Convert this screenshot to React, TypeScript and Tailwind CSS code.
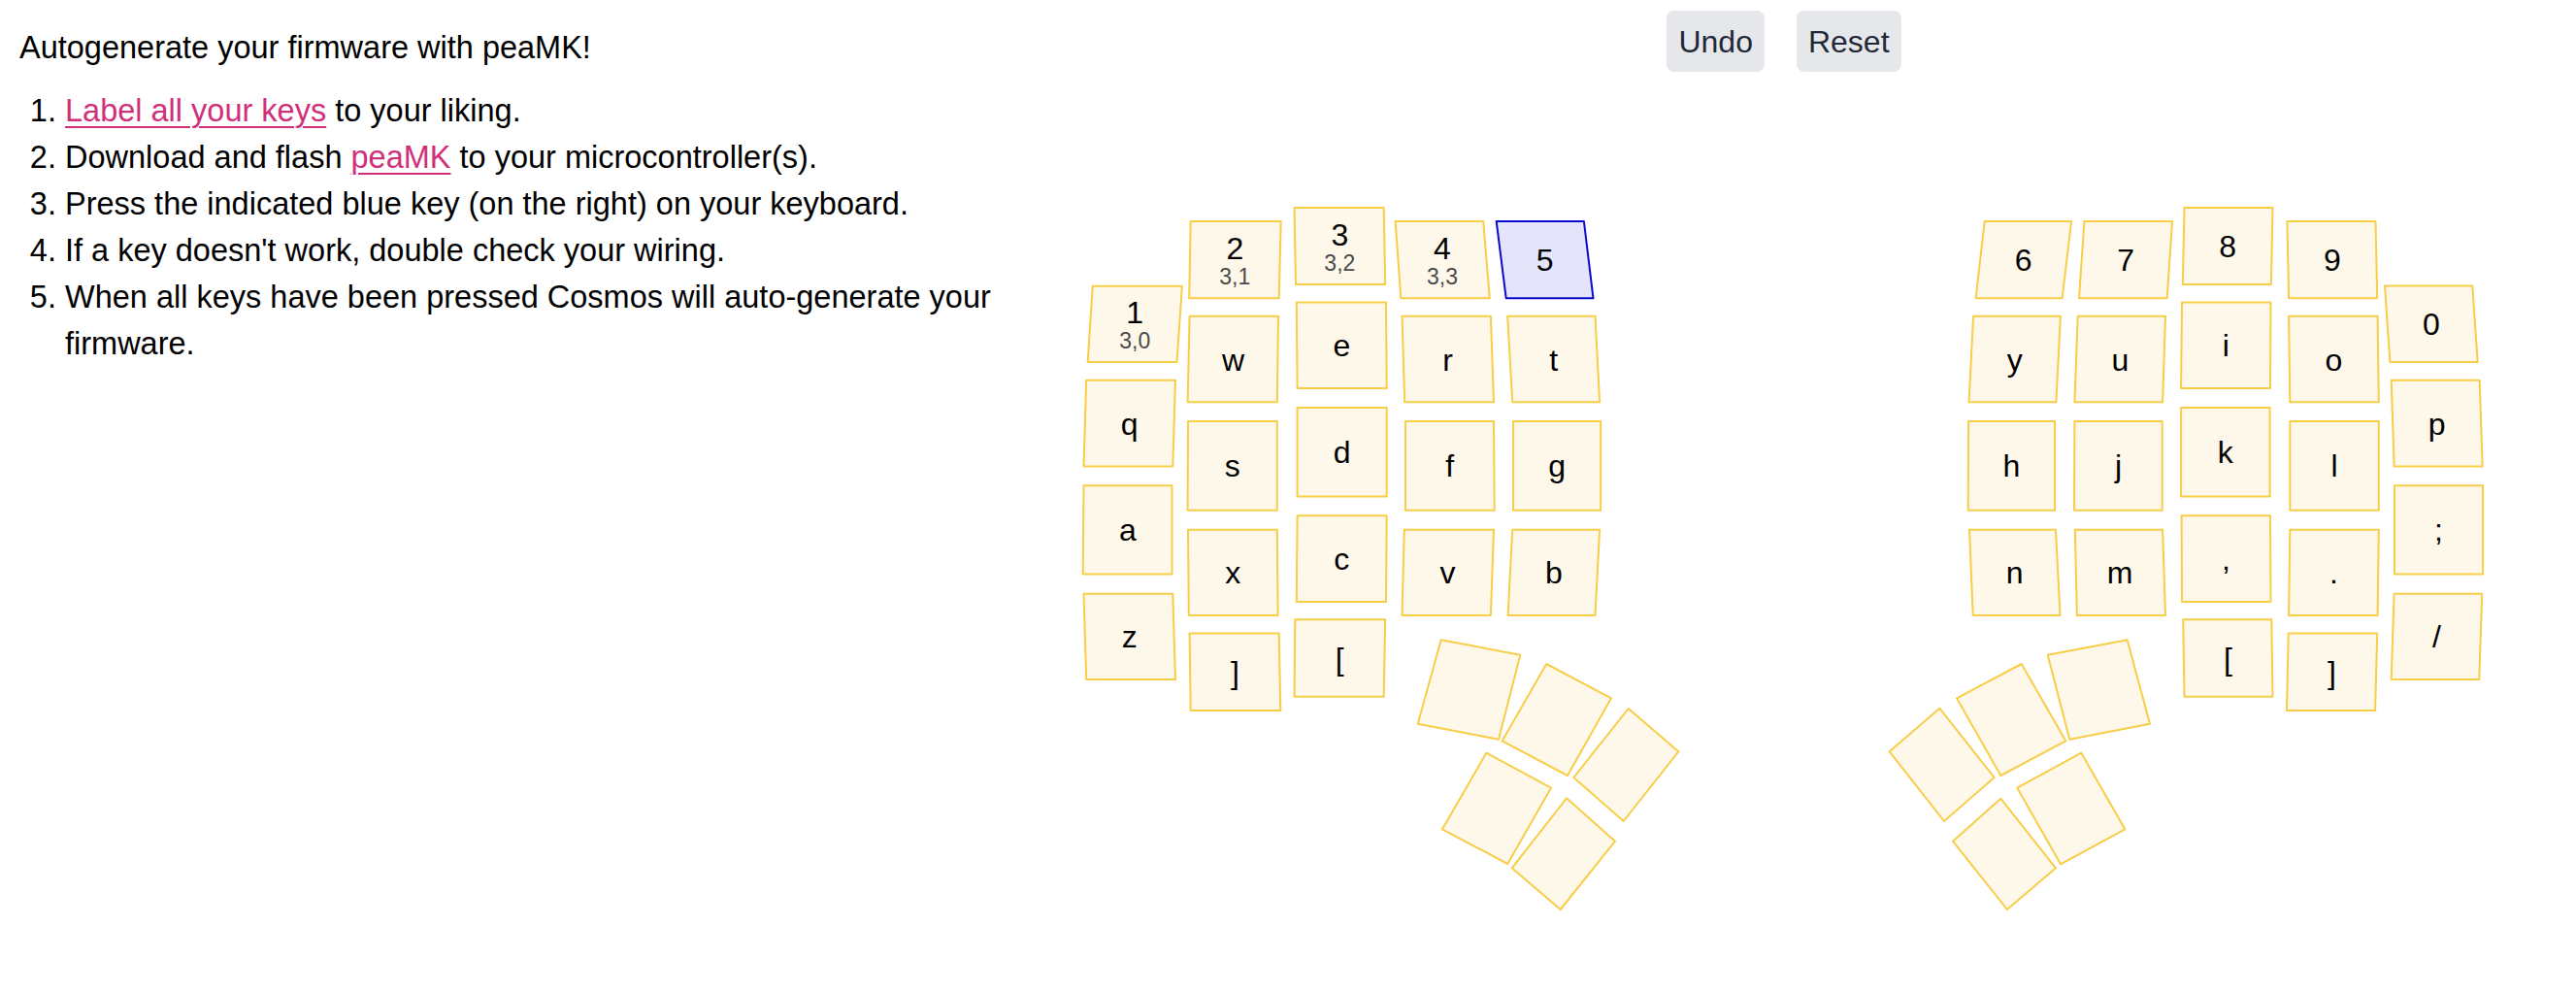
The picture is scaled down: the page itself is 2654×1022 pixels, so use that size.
import React from "react";

type Pt = [number, number];
type Key = { p: Pt[]; l?: string; s?: string; a?: boolean };

const keys: Key[] = [
  // left half
  { p: [[1125.7, 294.8], [1217.9, 294.8], [1212.5, 373.0], [1120.7, 373.0]], l: "1", s: "3,0" },
  { p: [[1226.7, 228], [1319.7, 228], [1317.7, 307.3], [1225.2, 307.3]], l: "2", s: "3,1" },
  { p: [[1333.5, 214], [1425.7, 214], [1427.2, 293], [1335.0, 293]], l: "3", s: "3,2" },
  { p: [[1437.6, 228], [1528.2, 228], [1534.8, 307.3], [1443.3, 307.3]], l: "4", s: "3,3" },
  { p: [[1541.7, 228], [1631.9, 228], [1641.5, 307.3], [1551.7, 307.3]], l: "5", a: true },
  { p: [[1225.6, 325.8], [1317.0, 325.8], [1315.8, 414.3], [1223.6, 414.3]], l: "w" },
  { p: [[1335.8, 311.4], [1428.0, 311.4], [1428.7, 400], [1336.6, 400]], l: "e" },
  { p: [[1444.5, 325.8], [1535.9, 325.8], [1539.0, 414.3], [1447.2, 414.3]], l: "r" },
  { p: [[1553.2, 325.8], [1643.5, 325.8], [1648.1, 414.3], [1558.2, 414.3]], l: "t" },
  { p: [[1119.2, 391.8], [1211.0, 391.8], [1208.3, 480.4], [1116.5, 480.4]], l: "q" },
  { p: [[1224.0, 433.9], [1315.8, 433.9], [1315.8, 525.8], [1223.6, 525.8]], l: "s" },
  { p: [[1336.6, 419.9], [1428.7, 419.9], [1428.7, 511.4], [1336.6, 511.4]], l: "d" },
  { p: [[1448.0, 433.9], [1539.0, 433.9], [1539.7, 525.8], [1448.0, 525.8]], l: "f" },
  { p: [[1559.0, 433.9], [1649.2, 433.9], [1649.2, 525.8], [1559.0, 525.8]], l: "g" },
  { p: [[1116.5, 500.3], [1207.5, 500.3], [1207.5, 591.5], [1115.7, 591.5]], l: "a" },
  { p: [[1224.0, 545.7], [1315.8, 545.7], [1316.6, 633.9], [1224.8, 633.9]], l: "x" },
  { p: [[1336.6, 531.3], [1428.7, 531.3], [1428.0, 619.9], [1335.8, 619.9]], l: "c" },
  { p: [[1446.8, 545.7], [1539.0, 545.7], [1535.9, 633.9], [1444.5, 633.9]], l: "v" },
  { p: [[1558.2, 545.7], [1648.1, 545.7], [1643.5, 633.9], [1553.6, 633.9]], l: "b" },
  { p: [[1116.5, 611.8], [1208.3, 611.8], [1211.0, 700], [1119.2, 700]], l: "z" },
  { p: [[1225.6, 652.4], [1317.7, 652.4], [1319.3, 732.1], [1226.7, 732.1]], l: "]" },
  { p: [[1334.3, 638.3], [1427.2, 638.3], [1425.7, 717.7], [1333.5, 717.7]], l: "[" },
  // left thumbs
  { p: [[1484.7, 659.3], [1566.3, 674.7], [1544, 761.7], [1460.7, 745.7]] },
  { p: [[1593.3, 684], [1660, 719.3], [1615, 799], [1547.7, 763.3]] },
  { p: [[1677.7, 730], [1729.3, 774.3], [1672.7, 846], [1621.3, 801]] },
  { p: [[1531.3, 775.7], [1598, 811.7], [1553.3, 890], [1486, 854.3]] },
  { p: [[1614, 822.3], [1664, 866.7], [1607.7, 937], [1557.7, 894.3]] },
  // right half
  { p: [[2044.7, 228], [2134.1, 228], [2124.6, 307.3], [2035.6, 307.3]], l: "6" },
  { p: [[2147.4, 228], [2238.0, 228], [2232.7, 307.3], [2142.0, 307.3]], l: "7" },
  { p: [[2250.5, 214], [2341.5, 214], [2339.9, 293], [2248.8, 293]], l: "8" },
  { p: [[2356.4, 228], [2447.5, 228], [2449.2, 307.3], [2358.1, 307.3]], l: "9" },
  { p: [[2457.0, 294.4], [2547.3, 294.4], [2552.7, 373], [2462.4, 373]], l: "0" },
  { p: [[2033.1, 325.8], [2122.9, 325.8], [2118.4, 414.3], [2028.5, 414.3]], l: "y" },
  { p: [[2140.7, 325.8], [2231.0, 325.8], [2228.1, 414.3], [2137.4, 414.3]], l: "u" },
  { p: [[2248.0, 311.4], [2339.5, 311.4], [2339.0, 400], [2247.1, 400]], l: "i" },
  { p: [[2358.1, 325.8], [2449.6, 325.8], [2450.8, 414.3], [2359.3, 414.3]], l: "o" },
  { p: [[2463.7, 391.8], [2554.7, 391.8], [2557.6, 480.4], [2466.6, 480.4]], l: "p" },
  { p: [[2028.1, 433.9], [2117.1, 433.9], [2117.1, 525.8], [2027.7, 525.8]], l: "h" },
  { p: [[2137.4, 433.9], [2227.7, 433.9], [2227.7, 525.8], [2137.0, 525.8]], l: "j" },
  { p: [[2247.1, 419.9], [2338.6, 419.9], [2338.6, 511.4], [2247.1, 511.4]], l: "k" },
  { p: [[2359.3, 433.9], [2450.8, 433.9], [2450.8, 525.8], [2359.3, 525.8]], l: "l" },
  { p: [[2467.0, 500.3], [2558.1, 500.3], [2558.1, 591.5], [2467.0, 591.5]], l: ";" },
  { p: [[2029.0, 545.7], [2118.0, 545.7], [2122.5, 633.9], [2032.7, 633.9]], l: "n" },
  { p: [[2137.8, 545.7], [2228.1, 545.7], [2231.0, 633.9], [2139.9, 633.9]], l: "m" },
  { p: [[2247.6, 531.3], [2339.0, 531.3], [2339.5, 619.9], [2248.0, 619.9]], l: "," },
  { p: [[2359.3, 545.7], [2450.8, 545.7], [2449.6, 633.9], [2358.1, 633.9]], l: "." },
  { p: [[2466.6, 611.8], [2557.2, 611.8], [2554.3, 700], [2463.7, 700]], l: "/" },
  { p: [[2249.2, 638.3], [2340.3, 638.3], [2341.5, 717.7], [2250.5, 717.7]], l: "[" },
  { p: [[2357.7, 652.4], [2449.2, 652.4], [2447.1, 732.1], [2356.0, 732.1]], l: "]" },
  // right thumbs
  { p: [[2109.7, 674.7], [2191.7, 659.3], [2215, 745.7], [2132.3, 761.7]] },
  { p: [[2016, 719.3], [2082.7, 684], [2128.3, 763.3], [2061.3, 799]] },
  { p: [[1946.7, 774.3], [1998.3, 729.7], [2054.7, 801], [2003, 846]] },
  { p: [[2078.3, 811.7], [2144.3, 775.7], [2189.3, 854.3], [2123, 890.3]] },
  { p: [[2012, 866.7], [2061.3, 822.7], [2118, 894.3], [2068, 937]] },
];

function KeyShape({ k }: { k: Key }) {
  const cx = k.p.reduce((a, q) => a + q[0], 0) / 4;
  const cy = k.p.reduce((a, q) => a + q[1], 0) / 4;
  return (
    <g>
      <polygon
        points={k.p.map((q) => q.join(",")).join(" ")}
        fill={k.a ? "#e4e4fb" : "#fef8eb"}
        stroke={k.a ? "#0b0bd0" : "#f8cd48"}
        strokeWidth={2}
        strokeLinejoin="round"
      />
      {k.l && k.s ? (
        <>
          <text x={cx} y={cy - 1} textAnchor="middle" fontSize={32} fill="#000">
            {k.l}
          </text>
          <text x={cx} y={cy + 25} textAnchor="middle" fontSize={23} fill="#4a4a4a">
            {k.s}
          </text>
        </>
      ) : k.l ? (
        <text x={cx} y={cy + 11.5} textAnchor="middle" fontSize={32} fill="#000">
          {k.l}
        </text>
      ) : null}
    </g>
  );
}

export default function App() {
  return (
    <div
      className="w-[2654px] h-[1022px] bg-white text-black flex overflow-hidden"
      style={{ fontFamily: '"Liberation Sans", Arial, sans-serif' }}
    >
      <div className="w-[1080px] shrink-0 pl-[20px] pt-[25px] text-[32.5px] leading-[48px]">
        <p>Autogenerate your firmware with peaMK!</p>
        <ol className="list-decimal pl-[47px] mt-[17px]">
          <li>
            <a className="text-[#d0307a] underline decoration-[2px] underline-offset-[5px]">Label all your keys</a> to your liking.
          </li>
          <li>
            Download and flash{" "}
            <a className="text-[#d0307a] underline decoration-[2px] underline-offset-[5px]">peaMK</a> to your microcontroller(s).
          </li>
          <li>Press the indicated blue key (on the right) on your keyboard.</li>
          <li>If a key doesn't work, double check your wiring.</li>
          <li>When all keys have been pressed Cosmos will auto-generate your firmware.</li>
        </ol>
      </div>
      <div className="w-[1516px] shrink-0 flex flex-col items-center">
        <div className="flex gap-[33px] pt-[11px]">
          <button className="h-[63px] px-[12px] rounded-lg bg-[#e5e7eb] text-[#1f2937] text-[32px] leading-[48px]">
            Undo
          </button>
          <button className="h-[63px] px-[12px] rounded-lg bg-[#e5e7eb] text-[#1f2937] text-[32px] leading-[48px]">
            Reset
          </button>
        </div>
        <svg
          width={1516}
          height={940}
          viewBox="1080 82 1516 940"
          className="mt-[8px] block"
          style={{ fontFamily: '"Liberation Sans", Arial, sans-serif' }}
        >
          {keys.map((k, i) => (
            <KeyShape key={i} k={k} />
          ))}
        </svg>
      </div>
    </div>
  );
}
